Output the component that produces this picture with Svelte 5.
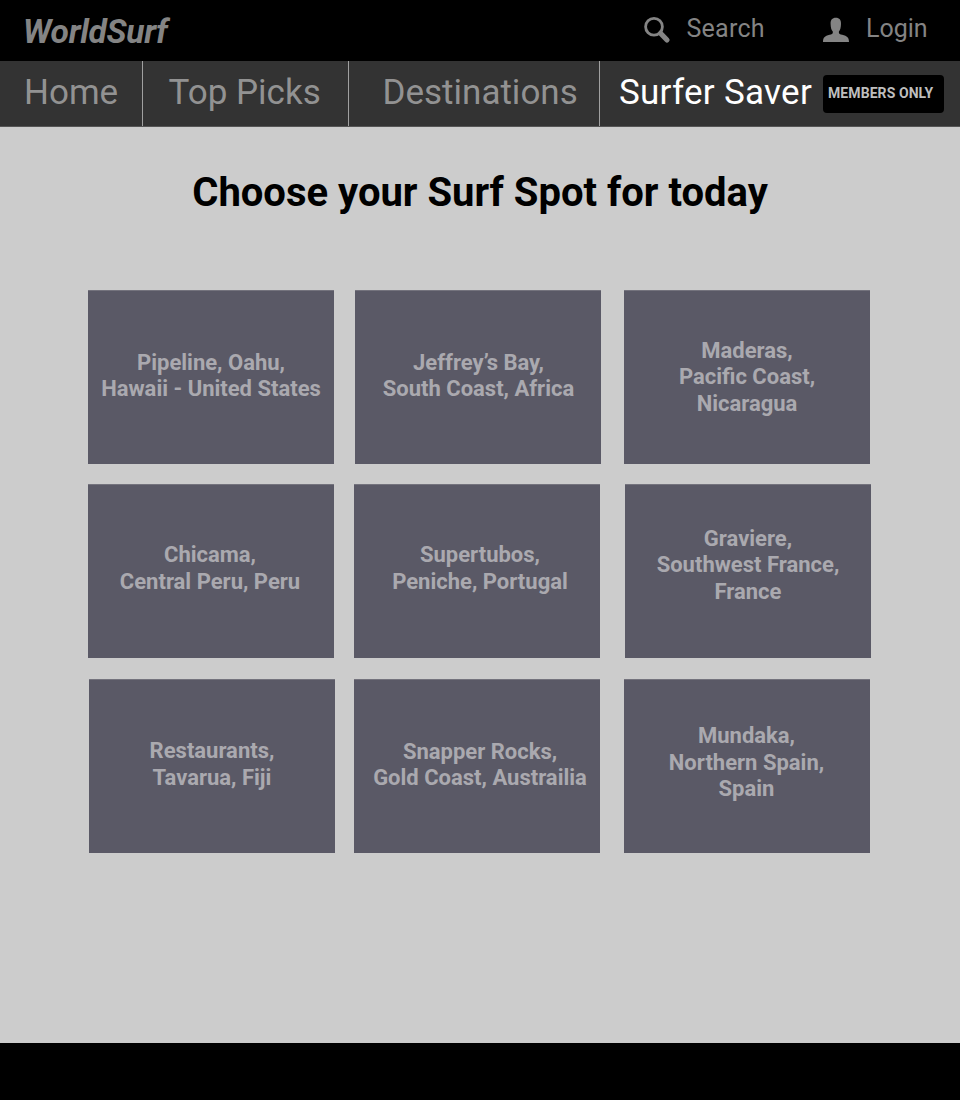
<script>
  const nav = [
    { label: 'Home', x: 24, w: 143 },
    { label: 'Top Picks', x: 25.5, w: 206 },
    { label: 'Destinations', x: 33.5, w: 251 }
  ];
  const spots = [
    { lines: ['Pipeline, Oahu,', 'Hawaii - United States'], x: 0, t: 58.7 },
    { lines: ['Jeffrey’s Bay,', 'South Coast, Africa'], x: -1, t: 58.7, d: 1 },
    { lines: ['Maderas,', 'Pacific Coast,', 'Nicaragua'], x: 0, t: 46.7 },
    { lines: ['Chicama,', 'Central Peru, Peru'], x: 0, t: 57, d: -2 },
    { lines: ['Supertubos,', 'Peniche, Portugal'], x: -2, t: 57, d: 6 },
    { lines: ['Graviere,', 'Southwest France,', 'France'], x: 1, t: 40.4 },
    { lines: ['Restaurants,', 'Tavarua, Fiji'], x: 1, t: 58.2 },
    { lines: ['Snapper Rocks,', 'Gold Coast, Austrailia'], x: -2, t: 58.8, d: 6 },
    { lines: ['Mundaka,', 'Northern Spain,', 'Spain'], x: 0, t: 43.2, d: -1 }
  ];
</script>

<div class="page">
  <header>
    <div class="logo">WorldSurf</div>
    <div class="action search">
      <svg width="28" height="28" viewBox="0 0 28 28"><circle cx="11" cy="10.7" r="8.4" fill="none" stroke="currentColor" stroke-width="2.8" /><path d="M17.5 17.3L24 24" stroke="currentColor" stroke-width="5.2" stroke-linecap="round" /></svg>
      <span>Search</span>
    </div>
    <div class="action login">
      <svg width="28" height="28" viewBox="0 0 28 28"><path d="M13.8 1.8C10.2 1.8 8.4 4 8.6 8C8.7 11.8 9.4 14.2 10.8 15.6V17C10.6 17.9 9.8 18.2 7.6 18.8C2.6 20.2 1 21.6 1 26H27C27 21.6 25.2 20.2 20.2 18.8C18 18.2 17.1 17.9 16.9 17V15.6C18.2 14.2 18.9 11.8 19 8C19.2 4 17.4 1.8 13.8 1.8Z" fill="currentColor" /></svg>
      <span>Login</span>
    </div>
  </header>
  <nav>
    {#each nav as n}
      <div class="item" style="width:{n.w}px;padding-left:{n.x}px"><span>{n.label}</span></div>
    {/each}
    <div class="item active"><span>Surfer Saver</span><b>MEMBERS ONLY</b></div>
  </nav>
  <main>
    <h1>Choose your Surf Spot for today</h1>
    <div class="grid">
      {#each spots as s}
        <div class="card" style="margin-left:{s.x}px;padding-top:{s.t}px;text-indent:{s.d ?? 0}px">
          {#each s.lines as l}<div>{l}</div>{/each}
        </div>
      {/each}
    </div>
  </main>
  <footer></footer>
</div>

<style>
  :global(body) { margin: 0; }
  .page { width: 960px; height: 1100px; background: #ccc; font-family: Roboto, sans-serif; display: flex; flex-direction: column; overflow: hidden; }
  .page * { box-sizing: border-box; }
  header { height: 61px; background: #000; color: #848484; display: flex; flex: none; padding-left: 23px; }
  .logo { font-size: 33.5px; font-weight: 700; font-style: italic; line-height: 39px; padding-top: 12px; width: 620px; letter-spacing: -0.3px; }
  .action { display: flex; font-size: 25px; line-height: 30px; padding-top: 14px; white-space: nowrap; }
  .action svg { margin-top: 2px; flex: none; }
  .search { width: 179px; gap: 15.5px; letter-spacing: 0.25px; }
  .login { gap: 16px; }
  nav { height: 66px; background: #333; display: flex; flex: none; border-bottom: 1px solid #555; }
  .item { border-right: 1px solid #a0a0a0; font-size: 35px; line-height: 63.5px; color: #929292; white-space: nowrap; flex: none; }
  .active { border: 0; color: #fff; padding-left: 19px; display: flex; letter-spacing: 0.27px; }
  b { width: 121px; height: 38px; background: #000; color: #bebebe; border-radius: 4px; font-size: 14px; line-height: 37px; letter-spacing: 0.08px; padding-left: 5.5px; margin: 14px 0 0 10.5px; }
  main { flex: 1; }
  h1 { margin: 42px 0 0; font-size: 40px; line-height: 48px; text-align: center; font-weight: 700; }
  .grid { display: grid; grid-template-columns: 246px 246px 246px; grid-auto-rows: 174px; column-gap: 22px; row-gap: 20.4px; padding: 73px 0 0 88px; }
  .card { width: 246px; background: #5a5966; border-top: 1px solid #74737d; color: #aaa9af; font-size: 22px; font-weight: 700; line-height: 26.6px; text-align: center; white-space: nowrap; }
  footer { height: 57px; background: #000; flex: none; }
</style>
